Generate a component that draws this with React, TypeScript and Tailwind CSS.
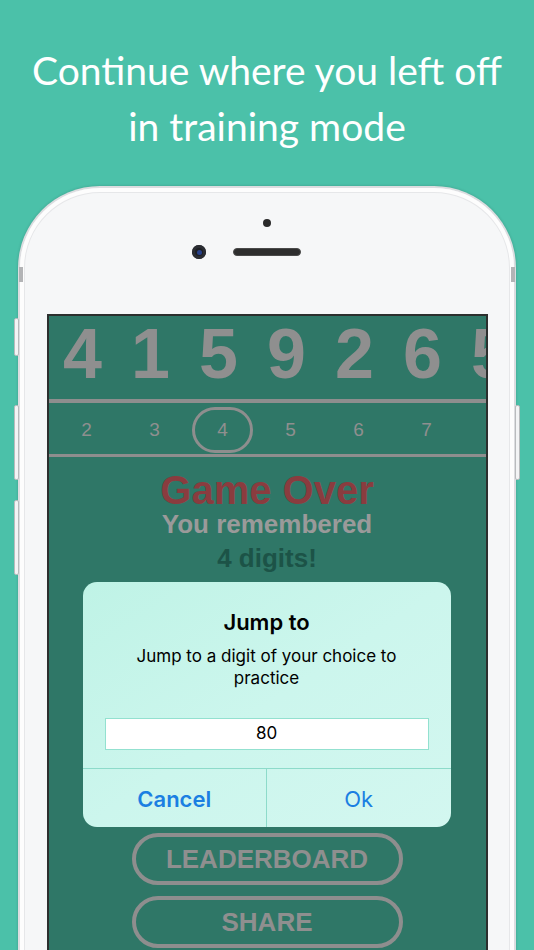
import React from 'react'

const bigDigits = ['4', '1', '5', '9', '2', '6', '5']
const smallDigits = [2, 3, 4, 5, 6, 7]

function SideButton({ className }: { className: string }) {
  return <span className={`absolute w-[5px] rounded-[2px] border border-[#b9bbbd] bg-[#f3f4f5] ${className}`} />
}

function JumpDialog() {
  return (
    <div className="absolute left-[34px] top-[266px] w-[368px] h-[245px] rounded-[14px] bg-gradient-to-br from-[#bff3e6] via-[#ccf6ed] to-[#d3f7f0] flex flex-col font-['Inter',sans-serif] font-normal text-black">
      <div className="pt-[27px] text-center text-[22px] leading-[26px] font-semibold">Jump to</div>
      <p className="mt-[10px] text-center text-[17px] leading-[22px]">
        Jump to a digit of your choice to
        <br />
        practice
      </p>
      <div className="mx-[22px] mt-[29px] h-[32px] bg-white border border-[#93e1d0] flex items-center justify-center text-[17px]">
        80
      </div>
      <div className="mt-[18px] flex flex-1 border-t border-[#8ddbca]">
        <button className="flex-1 border-r border-[#8ddbca] pt-[2px] text-[22px] font-semibold text-[#1b7fe2]">Cancel</button>
        <button className="flex-1 pt-[2px] text-[22px] font-normal text-[#1b7fe2]">Ok</button>
      </div>
    </div>
  )
}

function GameScreen() {
  return (
    <div className="relative self-center mt-[55px] w-[441px] h-[640px] border-x-2 border-t-2 border-[#2c2f2e] bg-[#2f7767] overflow-hidden font-['Liberation_Sans',Arial,sans-serif] font-bold">
      {/* digits already entered */}
      <div className="flex h-[83px] pt-[3px] text-[70px] leading-[70px] text-[#8f8f8f]">
        {bigDigits.map((d, i) => (
          <span key={i} className="w-[68px] shrink-0 text-center">{d}</span>
        ))}
      </div>
      <div className="h-[4px] bg-[#8e8e8e]" />

      {/* position strip */}
      <div className="flex h-[51px] pl-[4px] pt-[2px] items-center text-[19px] leading-[19px] font-normal text-[#8f8f8f]">
        {smallDigits.map((n) => (
          <span key={n} className="w-[68px] shrink-0 flex justify-center">
            {n === 4 ? (
              <span className="w-[61px] h-[46px] rounded-[26px] border-[3px] border-[#8e8e8e] flex items-center justify-center">{n}</span>
            ) : (
              n
            )}
          </span>
        ))}
      </div>
      <div className="h-[3px] bg-[#8e8e8e]" />

      <div className="mt-[13px] text-center text-[40px] leading-[40px] text-[#8a3c3f]">Game Over</div>
      <div className="text-center text-[26px] leading-[28px] text-[#9a9a9a]">You remembered</div>
      <div className="mt-[6px] text-center text-[26px] leading-[28px] text-[#1c5347]">4 digits!</div>
      <div className="mt-[5px] text-center text-[26px] leading-[28px] text-[#1c5347]">Best: 12</div>

      <div className="mt-[228px] flex flex-col items-center gap-[11px]">
        <button className="w-[271px] h-[52px] rounded-full border-4 border-[#8e8e8e] text-[26px] text-[#8f8f8f]">LEADERBOARD</button>
        <button className="w-[271px] h-[52px] rounded-full border-4 border-[#8e8e8e] text-[26px] text-[#8f8f8f]">SHARE</button>
      </div>

      <JumpDialog />
    </div>
  )
}

export default function App() {
  return (
    <div className="h-[950px] w-[534px] overflow-hidden bg-[#4bc1a9]">
      <h1 className="pt-[42px] text-center text-[39px] leading-[56px] text-white font-['Lato',sans-serif] font-normal">
        Continue where you left off
        <br />
        in training mode
      </h1>

      <div className="relative mx-auto mt-[32px] w-[498px]">
        <SideButton className="left-[-4px] top-[132px] h-[38px]" />
        <SideButton className="left-[-4px] top-[219px] h-[75px]" />
        <SideButton className="left-[-4px] top-[314px] h-[75px]" />
        <SideButton className="right-[-4px] top-[219px] h-[75px]" />

        <div className="rounded-t-[82px] bg-[#dcdde0] px-[2px] pt-[2px] shadow-[0_0_3px_rgba(0,0,0,0.18)]">
          <div className="relative flex flex-col h-[800px] rounded-t-[80px] bg-[#f6f7f8] shadow-[inset_0_0_0_4px_#fdfdfd,inset_0_0_0_5px_#e6e7e9]">
            {/* antenna bands */}
            <span className="absolute left-[-1px] top-[79px] h-[15px] w-[4px] bg-[#b3b4b6]" />
            <span className="absolute right-[-1px] top-[79px] h-[15px] w-[4px] bg-[#b3b4b6]" />

            <span className="self-center mt-[31px] h-[8px] w-[8px] rounded-full bg-[#2a2a2a]" />
            <div className="self-center mt-[18px] flex h-[14px] items-center gap-[27px]">
              <span className="h-[14px] w-[14px] rounded-full bg-[#1d1f24] shadow-[inset_0_0_0_3px_#2b2d33] flex items-center justify-center">
                <span className="h-[5px] w-[5px] rounded-full bg-[#27408a]" />
              </span>
              <span className="h-[8px] w-[68px] rounded-full bg-[#2e2e2e] border border-[#4a4a4a]" />
              <span className="h-[14px] w-[14px]" />
            </div>

            <GameScreen />
          </div>
        </div>
      </div>
    </div>
  )
}
